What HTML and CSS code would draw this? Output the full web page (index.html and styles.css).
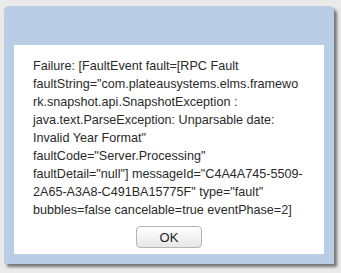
FILE: index.html
```html
<!DOCTYPE html>
<html>
<head>
<meta charset="utf-8">
<link rel="stylesheet" href="styles.css">
</head>
<body>
<div class="panel">
  <div class="titlebar"></div>
  <div class="content">
    <div class="message">
      <div class="line">Failure: [FaultEvent fault=[RPC Fault</div>
      <div class="line">faultString="com.plateausystems.elms.framewo</div>
      <div class="line">rk.snapshot.api.SnapshotException :</div>
      <div class="line">java.text.ParseException: Unparsable date:</div>
      <div class="line">Invalid Year Format"</div>
      <div class="line">faultCode="Server.Processing"</div>
      <div class="line">faultDetail="null"] messageId="C4A4A745-5509-</div>
      <div class="line">2A65-A3A8-C491BA15775F" type="fault"</div>
      <div class="line">bubbles=false cancelable=true eventPhase=2]</div>
    </div>
    <div class="actions">
      <button class="ok">OK</button>
    </div>
  </div>
</div>
</body>
</html>
```

FILE: styles.css
```css
html, body {
  margin: 0;
  padding: 0;
}
body {
  background: #eaeaea;
  width: 341px;
  height: 273px;
  overflow: hidden;
  font-family: "Liberation Sans", Arial, sans-serif;
}
.panel {
  margin: 6px 0 0 4px;
  width: 330px;
  height: 258px;
  background: #b9cde4;
  border-radius: 5px 5px 0 0;
  box-shadow: 3px 3px 3px rgba(0, 0, 0, 0.5);
  display: flex;
  flex-direction: column;
}
.titlebar {
  height: 39px;
  flex: none;
}
.content {
  background: #ffffff;
  margin: 0 10px;
  height: 209px;
  padding: 12px 0 0 19px;
  box-sizing: border-box;
  display: flex;
  flex-direction: column;
}
.message {
  font-size: 12.6px;
  line-height: 18px;
  color: #2a2a2a;
}
.line {
  white-space: nowrap;
}
.actions {
  display: flex;
  justify-content: center;
  margin-top: 7px;
  margin-left: -19px;
}
.ok {
  width: 66px;
  height: 22px;
  border: 1px solid #b4b4b4;
  border-radius: 4px;
  background: linear-gradient(#ffffff, #f3f3f3 50%, #e6e6e6);
  font-family: "Liberation Sans", Arial, sans-serif;
  font-size: 13px;
  color: #222222;
  padding: 0;
}
```
